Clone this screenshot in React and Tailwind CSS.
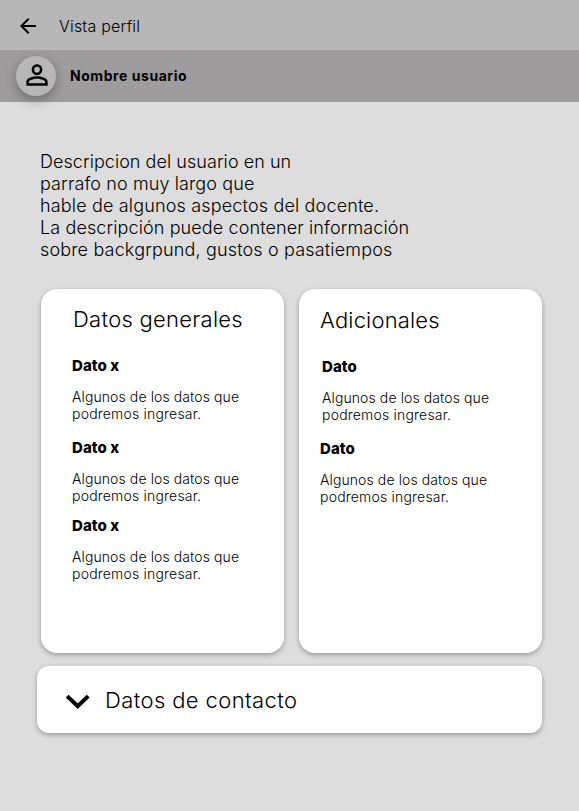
import React from "react";

function Datum({ label, className }) {
  return (
    <section className={className}>
      <h3 className="h-[17px] text-[15px] leading-[17px] font-extrabold tracking-[0.07px] whitespace-nowrap">{label}</h3>
      <p className="mt-[14px] text-[14px] leading-[17px] font-light tracking-[0.1px] whitespace-nowrap">
        Algunos de los datos que
        <br />
        <span className="tracking-[0.2px]">podremos ingresar.</span>
      </p>
    </section>
  );
}

const shadow = "shadow-[0_2px_5px_rgba(0,0,0,0.3)]";

export default function App() {
  return (
    <div className="h-[811px] w-[579px] overflow-hidden bg-[#dddddd] font-['Inter',sans-serif] text-black">
      <header className="flex h-[50px] items-center bg-[#b7b7b7] pl-[16px]">
        <svg className="size-6 mt-[2px]" viewBox="0 0 24 24">
          <path d="M20 11H7.83l5.59-5.59L12 4l-8 8 8 8 1.41-1.41L7.83 13H20v-2z" />
        </svg>
        <h1 className="ml-[19px] mt-px text-[16px] leading-[20px] font-light tracking-[0.2px] whitespace-nowrap">Vista perfil</h1>
      </header>
      <div className="flex h-[52px] items-center bg-[#9e9c9c] pl-[16px]">
        <div className="flex size-10 items-center justify-center rounded-full bg-[#b7b7b7] shadow-[0_4px_12px_rgba(0,0,0,0.3)]">
          <svg className="ml-px -mt-[2px] size-8" viewBox="0 0 24 24">
            <path d="M12 5.9a2.1 2.1 0 1 1 0 4.2 2.1 2.1 0 0 1 0-4.2m0 9c2.97 0 6.1 1.46 6.1 2.1v1.1H5.9V17c0-.64 3.13-2.1 6.1-2.1M12 4C9.79 4 8 5.79 8 8s1.79 4 4 4 4-1.79 4-4-1.79-4-4-4m0 9c-2.67 0-8 1.34-8 4v3h16v-3c0-2.66-5.33-4-8-4" />
          </svg>
        </div>
        <h2 className="ml-[14px] -mt-px text-[14px] leading-[17px] font-bold tracking-[0.55px] whitespace-nowrap">Nombre usuario</h2>
      </div>

      <p className="ml-[40px] mt-[49px] text-[18px] leading-[22px] font-light tracking-[0.11px] whitespace-nowrap">
        <span className="tracking-[0.05px]">Descripcion del usuario en un</span>
        <br />
        parrafo no muy largo que
        <br />
        <span className="tracking-[0.16px]">hable de algunos aspectos del docente.</span>
        <br />
        La descripción puede contener información
        <br />
        <span className="tracking-[0.16px]">sobre backgrpund, gustos o pasatiempos</span>
      </p>

      <div className="ml-[41px] mt-[28px] flex gap-[15px]">
        <article className={`h-[364px] w-[243px] rounded-[16px] bg-white pl-[31px] pt-[17px] ${shadow}`}>
          <h2 className="ml-px text-[22px] leading-[27px] font-light tracking-[0.28px] whitespace-nowrap">Datos generales</h2>
          <Datum label="Dato x" className="mt-[24px]" />
          <Datum label="Dato x" className="mt-[17px]" />
          <Datum label="Dato x" className="mt-[13px]" />
        </article>
        <article className={`h-[364px] w-[243px] rounded-[16px] bg-white pl-[21px] pt-[18px] ${shadow}`}>
          <h2 className="text-[22px] leading-[27px] font-light tracking-[0.18px] whitespace-nowrap">Adicionales</h2>
          <Datum label="Dato" className="ml-[2px] mt-[24px]" />
          <Datum label="Dato" className="mt-[17px]" />
        </article>
      </div>

      <div className={`ml-[37px] mt-[13px] flex h-[67px] w-[505px] items-center rounded-[12px] bg-white pl-[29px] ${shadow}`}>
        <svg className="mt-[5px] h-[16px] w-[24px]" viewBox="0 0 24 16">
          <path d="M1.2 2.1 11.7 12.3 22.2 2.1" fill="none" stroke="#000" strokeWidth="4" />
        </svg>
        <h2 className="ml-[15px] mt-[2px] text-[22px] leading-[27px] font-light tracking-[0.39px] whitespace-nowrap">Datos de contacto</h2>
      </div>
    </div>
  );
}
